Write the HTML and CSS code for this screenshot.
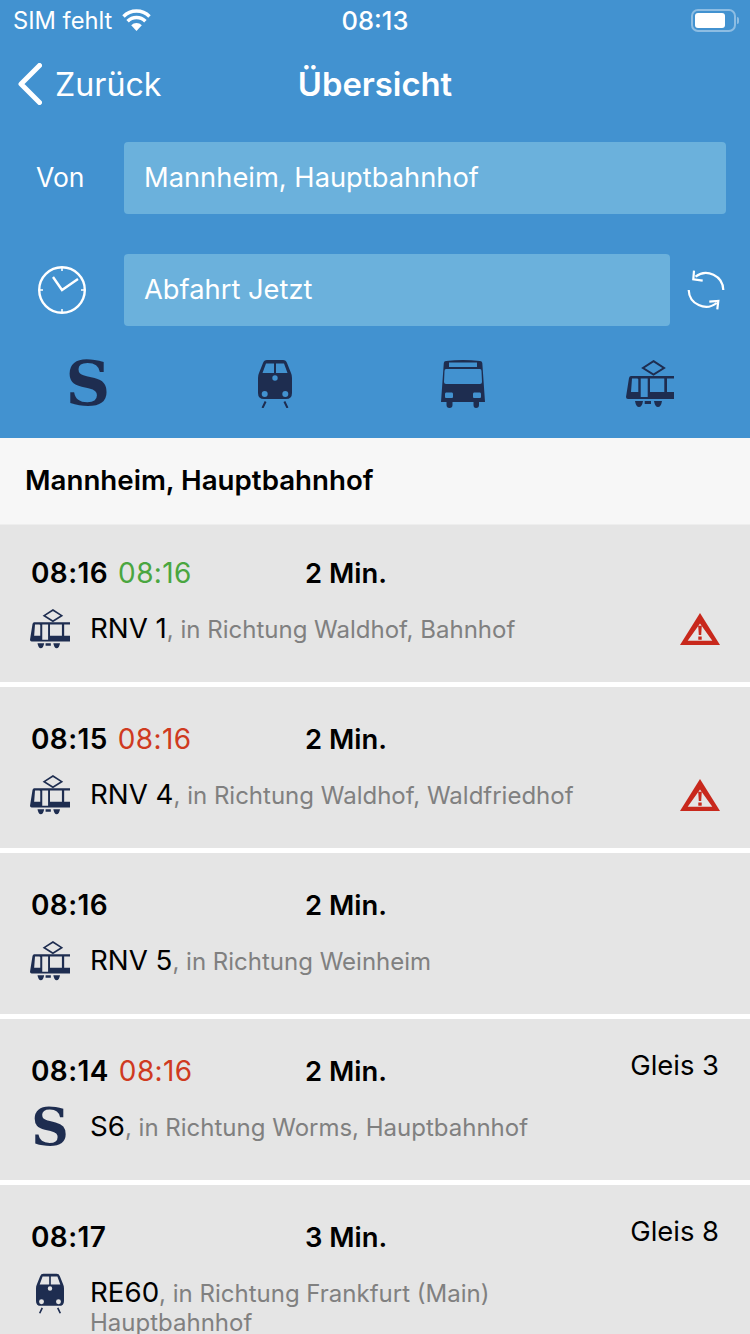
FILE: index.html
```html
<!DOCTYPE html>
<html lang="de">
<head>
<meta charset="utf-8">
<title>Übersicht</title>
<link rel="stylesheet" href="styles.css">
</head>
<body>
<svg class="defs" width="0" height="0" aria-hidden="true">
  <symbol id="tram" viewBox="0 0 48 48">
    <path d="M27.5 1.2 38 8 27.5 14.6 17 8Z" fill="none" stroke="currentColor" stroke-width="2"/>
    <path fill-rule="evenodd" fill="currentColor" d="M5 16H48V39H2Q0 39 0 37L3 18Q3.500 16 5 16ZM6 18.500 5 32H12.300V19.500Q12.300 18.500 11 18.500ZM14.700 18.500V37H21.700V18.500ZM24 18.500V32H38.300V18.500ZM41 18.500V32H48V18.500Z"/>
    <path fill="currentColor" d="M9 41H17Q16 47 13 47 10 47 9 41ZM18.700 41H25V44H18.700ZM28 41H36Q35 47 32 47 29 47 28 41Z"/>
  </symbol>
  <symbol id="train" viewBox="0 0 34 48">
    <path fill-rule="evenodd" fill="currentColor" d="M9 0H25Q28 0 29 3L33 13Q34 15 34 18V33Q34 39 28 39H6Q0 39 0 33V18Q0 15 1 13L5 3Q6 0 9 0ZM8 3.500 4.500 13H16V3.500ZM18 3.500V13H29.500L26 3.500ZM17 15.300A2.700 2.700 0 1 0 17 20.700 2.700 2.700 0 1 0 17 15.300ZM6.700 31A3 3 0 1 0 6.700 37 3 3 0 1 0 6.700 31ZM27.300 31A3 3 0 1 0 27.300 37 3 3 0 1 0 27.300 31Z"/>
    <path d="M7.600 41.500 4.500 48M26.400 41.500 29.500 48" fill="none" stroke="currentColor" stroke-width="2"/>
  </symbol>
  <symbol id="bus" viewBox="0 0 44 48">
    <path fill-rule="evenodd" fill="currentColor" d="M5 1Q22-1 39 1 41 1 41.300 3L44 42H32.500V45Q32.500 48 35 48 38 48 38 45V42H11.500V45Q11.500 48 8.500 48 5.500 48 5.500 45V42H0L2.800 3Q3 1 5 1ZM8 2.500V7H36V2.500ZM5 9Q3.500 9 3.500 11L3 22Q3 24 5 24H39Q41 24 41 22L40.500 11Q40.500 9 39 9ZM5 32.500Q4 32.500 4 34V37Q4 38 5 38H11Q12 38 12 37V34Q12 32.500 11 32.500ZM33 32.500Q32 32.500 32 34V37Q32 38 33 38H39Q40 38 40 37V34Q40 32.500 39 32.500Z"/>
  </symbol>
  <symbol id="warn" viewBox="0 0 40 32">
    <path fill-rule="evenodd" fill="currentColor" d="M20 0 40 32H0ZM20 10.500 7.700 27.700H32.300ZM18.200 12.700H21.800L21.200 22H18.800ZM18.300 23.500H21.700V26.700H18.300Z"/>
  </symbol>
</svg>

<header class="head">
  <div class="status">
    <div class="status-left">
      <span>SIM fehlt</span>
      <svg class="wifi" viewBox="0 0 29 22">
        <path d="M14.500 22 9.200 16.300A7.500 7.500 0 0 1 19.800 16.300Z" fill="#fff"/>
        <path d="M5.600 12.300A12.500 12.500 0 0 1 23.400 12.300M1.500 7.400A18.500 18.500 0 0 1 27.500 7.400" fill="none" stroke="#fff" stroke-width="3.500"/>
      </svg>
    </div>
    <div class="status-time">08:13</div>
    <div class="status-right">
      <div class="battery"><div class="battery-level"></div></div>
      <div class="battery-nub"></div>
    </div>
  </div>

  <nav class="nav">
    <div class="back">
      <svg class="chevron" viewBox="0 0 24 42"><path d="M21.500 2.500 3 21 21.500 39.500" fill="none" stroke="#fff" stroke-width="5" stroke-linecap="round" stroke-linejoin="round"/></svg>
      <span>Zurück</span>
    </div>
    <div class="nav-title">Übersicht</div>
    <div></div>
  </nav>

  <div class="field-row">
    <div class="field-label">Von</div>
    <div class="field">Mannheim, Hauptbahnhof</div>
  </div>

  <div class="field-row field-row-time">
    <div class="field-label">
      <svg class="clock" viewBox="0 0 48 48">
        <circle cx="24" cy="24" r="22.800" fill="none" stroke="#fff" stroke-width="2.400"/>
        <path d="M24 1V5M24 43V47M1 24H5M43 24H47" stroke="#fff" stroke-width="1.500"/>
        <path d="M15 11 24 24 40 13" fill="none" stroke="#fff" stroke-width="2.400"/>
      </svg>
    </div>
    <div class="field">Abfahrt Jetzt</div>
    <svg class="refresh" viewBox="0 0 40 40">
      <path d="M37.300 20A17.300 17.300 0 0 0 9.500 6.700M8 .7 7.300 9.300 16.700 10.700" fill="none" stroke="#fff" stroke-width="2.200"/>
      <path d="M2.700 20A17.300 17.300 0 0 0 30.700 33M23.300 31.700 32.300 31 31.300 39.300" fill="none" stroke="#fff" stroke-width="2.200"/>
    </svg>
  </div>

  <div class="modes">
    <div class="mode"><span class="s-logo">S</span></div>
    <div class="mode"><svg class="ic-train"><use href="#train"/></svg></div>
    <div class="mode"><svg class="ic-bus"><use href="#bus"/></svg></div>
    <div class="mode"><svg class="ic-tram"><use href="#tram"/></svg></div>
  </div>
</header>

<div class="station">Mannheim, Hauptbahnhof</div>

<main class="list">
  <article class="row row-first">
    <div class="line-top">
      <div class="times"><b>08:16</b><span class="ok">08:16</span></div>
      <b class="wait">2 Min.</b>
    </div>
    <div class="line-bottom">
      <div class="icon-slot"><svg class="ic-tram-s"><use href="#tram"/></svg></div>
      <div class="dest"><span class="name">RNV 1</span>, in Richtung Waldhof, Bahnhof</div>
      <svg class="warn"><use href="#warn"/></svg>
    </div>
  </article>

  <article class="row">
    <div class="line-top">
      <div class="times"><b>08:15</b><span class="late">08:16</span></div>
      <b class="wait">2 Min.</b>
    </div>
    <div class="line-bottom">
      <div class="icon-slot"><svg class="ic-tram-s"><use href="#tram"/></svg></div>
      <div class="dest"><span class="name">RNV 4</span>, in Richtung Waldhof, Waldfriedhof</div>
      <svg class="warn"><use href="#warn"/></svg>
    </div>
  </article>

  <article class="row">
    <div class="line-top">
      <div class="times"><b>08:16</b></div>
      <b class="wait">2 Min.</b>
    </div>
    <div class="line-bottom">
      <div class="icon-slot"><svg class="ic-tram-s"><use href="#tram"/></svg></div>
      <div class="dest"><span class="name">RNV 5</span>, in Richtung Weinheim</div>
    </div>
  </article>

  <article class="row">
    <div class="line-top">
      <div class="times"><b>08:14</b><span class="late">08:16</span></div>
      <b class="wait">2 Min.</b>
      <div class="platform">Gleis 3</div>
    </div>
    <div class="line-bottom">
      <div class="icon-slot"><span class="s-logo s-logo-small">S</span></div>
      <div class="dest"><span class="name">S6</span>, in Richtung Worms, Hauptbahnhof</div>
    </div>
  </article>

  <article class="row">
    <div class="line-top">
      <div class="times"><b>08:17</b></div>
      <b class="wait">3 Min.</b>
      <div class="platform">Gleis 8</div>
    </div>
    <div class="line-bottom">
      <div class="icon-slot"><svg class="ic-train-s"><use href="#train"/></svg></div>
      <div class="dest"><span class="name">RE60</span>, in Richtung Frankfurt (Main) Hauptbahnhof</div>
    </div>
  </article>
</main>
</body>
</html>
```

FILE: styles.css
```css
* { box-sizing: border-box; }
html, body { margin: 0; height: 1334px; overflow: hidden; background: #fff; }
body { font-family: Inter, "Noto Sans", sans-serif; color: #000; }
b { font-weight: 600; }
.defs { position: absolute; }

.head { background: #4292d0; color: #fff; height: 438px; }

.status { display: grid; grid-template-columns: 1fr auto 1fr; align-items: center; height: 40px; font-size: 23.700px; }
.status-left { display: flex; align-items: center; padding-left: 13px; gap: 10px; }
.wifi { width: 29px; height: 22px; }
.status-time { font-size: 25.500px; font-weight: 500; }
.status-right { display: flex; justify-content: flex-end; align-items: center; padding-right: 11px; gap: 1px; }
.battery { width: 45px; height: 23px; border: 2px solid rgba(255,255,255,.4); border-radius: 7px; padding: 2px; }
.battery-level { width: 30px; height: 15px; background: #fff; border-radius: 3px; }
.battery-nub { width: 2px; height: 7px; background: rgba(255,255,255,.4); border-radius: 0 2px 2px 0; }

.nav { display: grid; grid-template-columns: 1fr auto 1fr; align-items: center; height: 88px; }
.back { display: flex; align-items: center; padding-left: 18px; gap: 13px; font-size: 32.200px; }
.chevron { width: 24px; height: 42px; }
.nav-title { font-size: 32.800px; font-weight: 600; }

.field-row { display: flex; align-items: center; margin-top: 14px; padding-right: 24px; }
.field-row-time { margin-top: 40px; padding-right: 0; }
.field-label { width: 124px; padding: 0 0 2px 36px; font-size: 26.500px; display: flex; }
.field-row-time .field-label { padding-bottom: 0; }
.field { flex: 1; height: 72px; display: flex; align-items: center; padding: 0 0 2px 20px; background: #6bb1dc; border-radius: 4px; font-size: 27.300px; }
.clock { width: 48px; height: 48px; margin-left: 2px; }
.refresh { width: 40px; height: 40px; margin: 0 24px 0 16px; }

.modes { display: flex; justify-content: space-between; align-items: center; margin-top: 34px; padding: 0 50px 0 38px; color: #1e2d50; }
.mode { width: 100px; height: 48px; display: flex; justify-content: center; align-items: center; }
.ic-train { width: 34px; height: 48px; }
.ic-bus { width: 44px; height: 48px; }
.ic-tram { width: 48px; height: 48px; }

.s-logo { font-family: "DejaVu Serif", serif; font-weight: 700; font-size: 62px; line-height: 48px; color: #1e2d50; }
.s-logo-small { font-size: 52px; line-height: 40px; }

.station { height: 87px; padding: 0 0 3px 25px; display: flex; align-items: center; background: #f7f7f7; border-bottom: 1px solid #eee; font-size: 27.700px; font-weight: 600; }

.list { display: flex; flex-direction: column; gap: 5px; }
.row { height: 161px; flex: none; padding: 36px 30px 0 30px; background: #e5e5e5; }
.row-first { height: 157px; padding-top: 32px; }

.line-top { display: flex; align-items: flex-start; height: 32px; font-size: 28px; line-height: 33px; }
.times { width: 275px; padding-left: 1px; display: flex; gap: 10px; letter-spacing: .4px; }
.wait { font-size: 27.400px; }
.ok { color: #4aa63f; }
.late { color: #cf3a20; }
.platform { margin-left: auto; margin-top: -6px; margin-right: 1px; font-size: 27.400px; }

.line-bottom { display: flex; align-items: flex-start; margin-top: 20px; }
.icon-slot { width: 40px; height: 40px; margin-right: 20px; flex: none; display: flex; justify-content: center; align-items: center; color: #1e2d50; }
.ic-tram-s { width: 40px; height: 40px; }
.ic-train-s { width: 28px; height: 41px; flex: none; }
.dest { flex: 1; padding: 5px 70px 0 0; font-size: 24px; line-height: 29px; color: #808080; }
.name { font-size: 27.700px; color: #000; }
.warn { width: 40px; height: 32px; margin-top: 4px; flex: none; color: #c8281c; margin-left: -40px; }
```
